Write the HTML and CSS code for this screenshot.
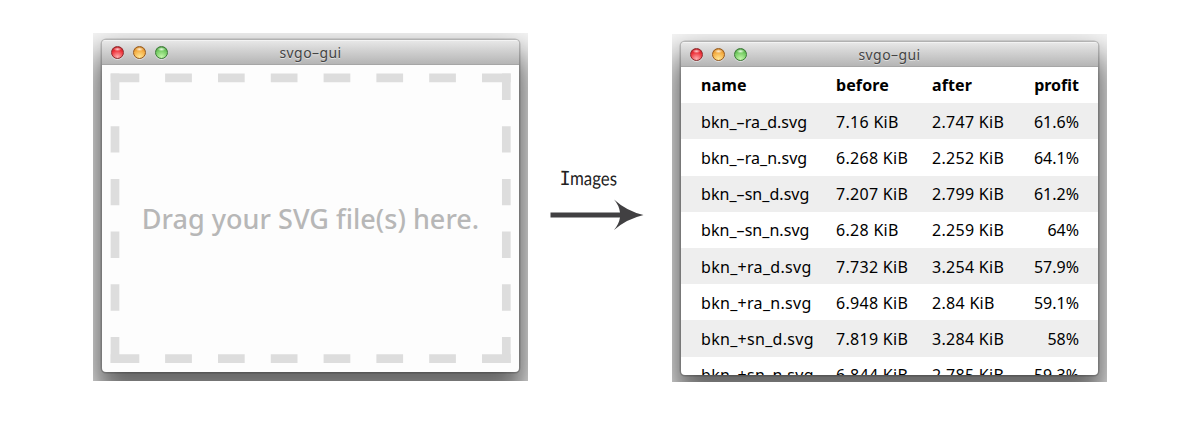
FILE: index.html
```html
<!DOCTYPE html>
<html lang="en">
<head>
<meta charset="utf-8">
<title>svgo-gui</title>
<link rel="stylesheet" href="styles.css">
</head>
<body>
<main class="stage">
  <section class="backdrop">
    <div class="window">
      <header class="titlebar"><div class="lights"><i class="light red"></i><i class="light yellow"></i><i class="light green"></i></div><span class="title">svgo–gui</span></header>
      <div class="drop">
        <svg class="dashes" width="402" height="292" viewBox="0 0 402 292" fill="none" stroke="#ddd" stroke-width="8.7">
          <path d="M.7 4.9H400.7M.7 285.700H400.7" stroke-dasharray="28.6 25.8 26.8 26.1 26.7 26.1 26.7 26.1 26.7 26.1 26.7 26.1 26.7 26.1 28.7 0"/>
          <path d="M5 .5V290.1M396.300 .5V290.1" stroke-dasharray="26.4 26.3"/>
        </svg>
        <span class="hint">Drag your SVG file(s) here.</span>
      </div>
    </div>
  </section>
  <section class="flow">
    <span class="flow-label"><span class="serif-i">I</span>mages</span>
    <svg class="arrow" width="94" height="32" viewBox="0 0 94 32"><path fill="#414042" d="M.5 13.500H70Q69 6 64 0.500Q76.500 12 93.500 16Q76.500 20 64 31Q69 25 70 18.500H.5Z"/></svg>
  </section>
  <section class="backdrop second">
    <div class="window">
      <header class="titlebar"><div class="lights"><i class="light red"></i><i class="light yellow"></i><i class="light green"></i></div><span class="title">svgo–gui</span></header>
      <div class="results">
        <div class="row head"><span>name</span><span>before</span><span>after</span><span>profit</span></div>
        <div class="row minus"><span>bkn_–ra_d.svg</span><span>7.16 KiB</span><span>2.747 KiB</span><span>61.6%</span></div>
        <div class="row minus"><span>bkn_–ra_n.svg</span><span>6.268 KiB</span><span>2.252 KiB</span><span>64.1%</span></div>
        <div class="row minus"><span>bkn_–sn_d.svg</span><span>7.207 KiB</span><span>2.799 KiB</span><span>61.2%</span></div>
        <div class="row minus"><span>bkn_–sn_n.svg</span><span>6.28 KiB</span><span>2.259 KiB</span><span>64%</span></div>
        <div class="row"><span>bkn_+ra_d.svg</span><span>7.732 KiB</span><span>3.254 KiB</span><span>57.9%</span></div>
        <div class="row"><span>bkn_+ra_n.svg</span><span>6.948 KiB</span><span>2.84 KiB</span><span>59.1%</span></div>
        <div class="row"><span>bkn_+sn_d.svg</span><span>7.819 KiB</span><span>3.284 KiB</span><span>58%</span></div>
        <div class="row"><span>bkn_+sn_n.svg</span><span>6.844 KiB</span><span>2.785 KiB</span><span>59.3%</span></div>
      </div>
    </div>
  </section>
</main>
</body>
</html>
```
FILE: styles.css
```css
* { box-sizing: border-box; }
body { margin: 0; background: #fff; font-family: "Noto Sans", "Open Sans", sans-serif; }
.stage { display: flex; align-items: flex-start; width: 1200px; height: 442px; padding: 33px 93px 0; overflow: hidden; }
.backdrop { flex: none; width: 435px; height: 348px; padding: 7px 9px 9px; overflow: hidden; background: #f8f8f8; }
.second { margin-top: 1px; padding-top: 8px; padding-bottom: 7px; }
.window { display: flex; flex-direction: column; width: 417px; height: 332px; border-radius: 4px; overflow: hidden; background: #fdfdfd; box-shadow: 0 0 0 1.500px rgba(0,0,0,.18), 0 20px 32px 8px rgba(0,0,0,.6); }
.second .window { height: 333px; background: #fff; }
.titlebar { position: relative; flex: none; display: flex; align-items: center; justify-content: center; height: 25px; background: linear-gradient(#e9e9e9, #d6d6d6 35%, #b5b5b5); border-bottom: 1px solid #a6a6a6; box-shadow: inset 0 1px #f3f3f3; }
.lights { position: absolute; left: 8.500px; top: 6px; display: flex; gap: 9px; }
.light { width: 13px; height: 13px; border-radius: 50%; border: 1px solid; box-shadow: 0 1px rgba(255,255,255,.5); }
.red { border-color: #8d2a2c; background: radial-gradient(ellipse 4px 2px at 50% 20%, #ffd5d5, transparent), radial-gradient(circle at 50% 90%, #ffb0b0, #ed3038 60%, #b81c25); }
.yellow { border-color: #96591c; background: radial-gradient(ellipse 4px 2px at 50% 20%, #fff1dc, transparent), radial-gradient(circle at 50% 90%, #ffe695, #f4ac42 60%, #c17820); }
.green { border-color: #3a7935; background: radial-gradient(ellipse 4px 2px at 50% 20%, #efffe9, transparent), radial-gradient(circle at 50% 90%, #c4f7ab, #74cb62 60%, #47943e); }
.title { font-size: 14px; line-height: 18px; letter-spacing: .4px; color: #444; text-shadow: 0 1px rgba(255,255,255,.5); padding-top: 1px; }
.drop { flex: 1; display: grid; grid-template-columns: 1fr; justify-items: center; padding-top: 8px; }
.dashes, .hint { grid-area: 1 / 1; }
.dashes { justify-self: start; margin-left: 8px; }
.hint { margin-top: 128px; font-size: 27px; font-weight: 500; line-height: 36px; letter-spacing: .03px; white-space: nowrap; color: #b7b7b7; }
.flow { flex: none; display: flex; flex-direction: column; align-items: flex-start; width: 144px; padding: 132px 0 0 22px; }
.flow-label { height: 34px; padding-left: 10px; font: 400 19.500px/26px Lato, sans-serif; color: #222; transform: scaleX(.86) rotate(.5deg); transform-origin: 10px 50%; }
.serif-i { display: inline-block; font-family: "DejaVu Sans Mono", monospace; font-weight: 200; transform: scaleX(1.1); }
.arrow { display: block; }
.results { flex: 1; overflow: hidden; font-size: 16px; color: #000; }
.row { display: grid; grid-template-columns: 135px 96px 94px 53px; align-items: center; height: 36.200px; padding: 1px 0 0 20px; white-space: nowrap; letter-spacing: .3px; }
.row:nth-child(even) { background: #eee; }
.row.minus span:first-child { letter-spacing: .05px; }
.row span:last-child { text-align: right; letter-spacing: 0; }
.row.head { padding-top: 0; font-weight: 700; letter-spacing: .1px; }
```
